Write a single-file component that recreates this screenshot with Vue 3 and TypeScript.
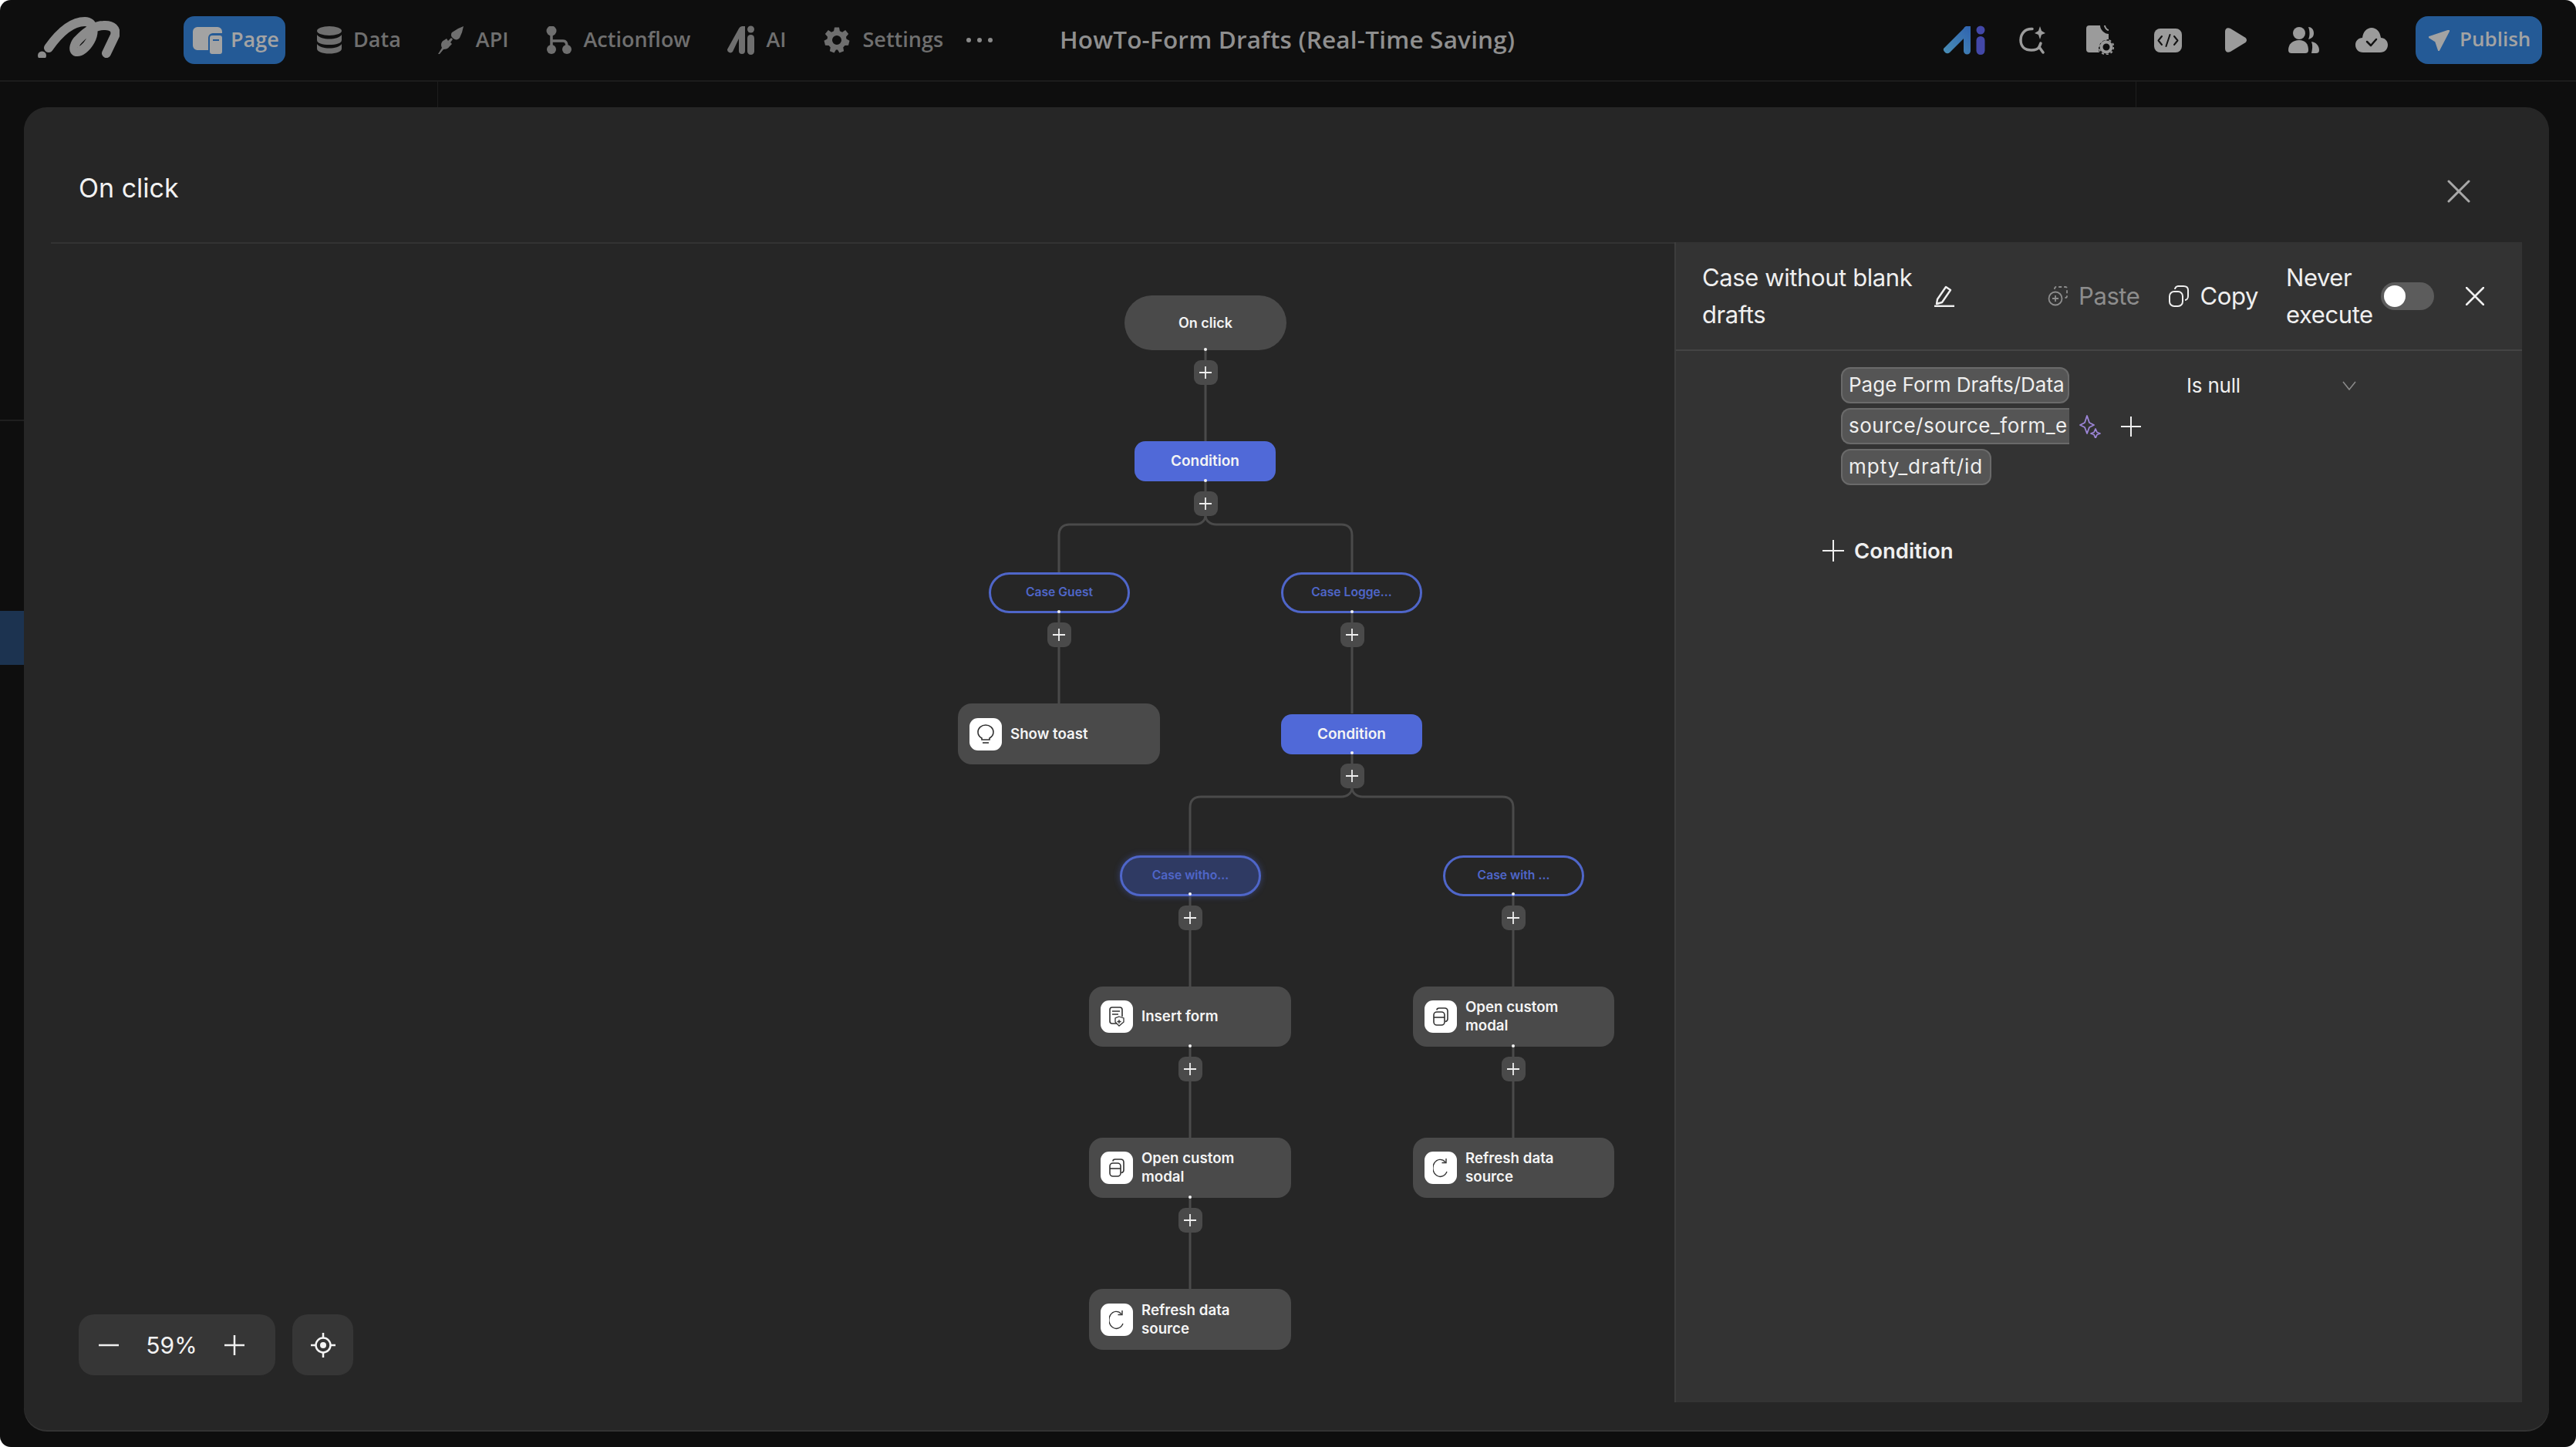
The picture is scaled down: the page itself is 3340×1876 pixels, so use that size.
<script setup lang="ts">
interface FlowNode {
  kind: 'start' | 'condition' | 'case' | 'action'
  label: string[]
  x: number
  y: number
  w: number
  h: number
  icon?: 'toast' | 'form' | 'modal' | 'refresh'
  active?: boolean
}

// page coordinates, the canvas starts at 66/316
const OX = 66
const OY = 316

const nodes: FlowNode[] = [
  { kind: 'start', label: ['On click'], x: 1458, y: 383, w: 210, h: 71 },
  { kind: 'condition', label: ['Condition'], x: 1471, y: 572, w: 183, h: 52 },
  { kind: 'case', label: ['Case Guest'], x: 1282, y: 742, w: 183, h: 53 },
  { kind: 'case', label: ['Case Logge...'], x: 1661, y: 742, w: 183, h: 53 },
  { kind: 'action', label: ['Show toast'], x: 1242, y: 912, w: 262, h: 79, icon: 'toast' },
  { kind: 'condition', label: ['Condition'], x: 1661, y: 926, w: 183, h: 52 },
  { kind: 'case', label: ['Case witho...'], x: 1452, y: 1109, w: 183, h: 53, active: true },
  { kind: 'case', label: ['Case with ...'], x: 1871, y: 1109, w: 183, h: 53 },
  { kind: 'action', label: ['Insert form'], x: 1412, y: 1279, w: 262, h: 78, icon: 'form' },
  { kind: 'action', label: ['Open custom', 'modal'], x: 1832, y: 1279, w: 261, h: 78, icon: 'modal' },
  { kind: 'action', label: ['Open custom', 'modal'], x: 1412, y: 1475, w: 262, h: 78, icon: 'modal' },
  { kind: 'action', label: ['Refresh data', 'source'], x: 1832, y: 1475, w: 261, h: 78, icon: 'refresh' },
  { kind: 'action', label: ['Refresh data', 'source'], x: 1412, y: 1671, w: 262, h: 79, icon: 'refresh' }
]

const addButtons = [
  [1563, 483], [1563, 653], [1373, 823], [1753, 823], [1753, 1006],
  [1543, 1190], [1962, 1190], [1543, 1386], [1962, 1386], [1543, 1582]
]

const dots = [
  [1563, 453], [1563, 623], [1373, 793], [1753, 793], [1753, 976],
  [1543, 1159], [1962, 1159], [1543, 1356], [1962, 1356], [1543, 1552]
]

const edges = [
  'M1563 454V572',
  'M1563 624V668',
  'M1563 668C1563 675 1557 680 1549 680H1387C1378 680 1373 685 1373 694V742',
  'M1563 668C1563 675 1569 680 1577 680H1739C1748 680 1753 685 1753 694V742',
  'M1373 795V912',
  'M1753 795V925',
  'M1753 977V1021',
  'M1753 1021C1753 1028 1747 1033 1739 1033H1557C1548 1033 1543 1038 1543 1047V1109',
  'M1753 1021C1753 1028 1759 1033 1767 1033H1948C1957 1033 1962 1038 1962 1047V1109',
  'M1543 1162V1279',
  'M1962 1162V1279',
  'M1543 1357V1475',
  'M1962 1357V1475',
  'M1543 1553V1671'
]

const box = (x: number, y: number, w: number, h: number) => ({
  left: `${x - OX}px`,
  top: `${y - OY}px`,
  width: `${w}px`,
  height: `${h}px`
})
</script>

<template>
  <div class="app">
    <header class="topbar">
      <svg class="logo" width="110" height="60" viewBox="45 15 110 60">
        <circle cx="54.500" cy="72" r="5.500" fill="#8c8c8c" />
        <path d="M63 62C75 45 92 28 110 28C122 28 123 42 117 53C112 62 104 68 99 67C94 66 96 56 103 50C112 41 122 33 134 33C146 32 151 38 149 46L138 69" fill="none" stroke="#8c8c8c" stroke-width="12" stroke-linecap="round" />
      </svg>
      <nav class="nav">
        <a class="nav-item active">
          <svg width="38" height="36" viewBox="0 0 38 36"><path d="M6 1H32A6 6 0 0 1 38 7V9H26A6 6 0 0 0 20 15V31H6A6 6 0 0 1 0 25V7A6 6 0 0 1 6 1Z" fill="#a3a3a3" /><path fill-rule="evenodd" d="M25 12H35A3 3 0 0 1 38 15V33A3 3 0 0 1 35 36H25A3 3 0 0 1 22 33V15A3 3 0 0 1 25 12ZM26 17V19H34V17Z" fill="#a3a3a3" /></svg>
          <span>Page</span>
        </a>
        <a class="nav-item">
          <svg width="32" height="36" viewBox="0 0 32 36" fill="#6f6f6f"><ellipse cx="16" cy="6" rx="16" ry="6" /><path d="M0 11C3 15 9 16.500 16 16.500S29 15 32 11V18C32 22 25 24 16 24S0 22 0 18Z" /><path d="M0 23C3 27 9 28.500 16 28.500S29 27 32 23V29C32 33 25 35.500 16 35.500S0 33 0 29Z" /></svg>
          <span>Data</span>
        </a>
        <a class="nav-item">
          <svg width="34" height="36" viewBox="0 0 34 36" fill="#6f6f6f"><path d="M18 8L26 3L33 0L31 8L28 15C26 18 22 18 20 16C17 14 16 11 18 8Z" /><path d="M0 36L5 28C3 24 4 20 8 18L11 16L13 19L17 15L19 17L16 21L18 23L15 26C13 29 10 30 7 30L2 36Z" /></svg>
          <span>API</span>
        </a>
        <a class="nav-item">
          <svg width="34" height="36" viewBox="0 0 34 36"><circle cx="7" cy="6" r="6.500" fill="#6f6f6f" /><circle cx="7" cy="30" r="6" fill="#6f6f6f" /><circle cx="27" cy="30" r="6" fill="#6f6f6f" /><path d="M7 10V30M7 19H22C25 19 27 21 27 26" fill="none" stroke="#6f6f6f" stroke-width="3.500" /></svg>
          <span>Actionflow</span>
        </a>
        <a class="nav-item">
          <svg width="35" height="38" viewBox="0 0 35 38" fill="#6f6f6f"><path d="M19 1H23V33A4 4 0 0 1 15 33V17L7 34A4 4 0 0 1 0 31L15 4A5 5 0 0 1 19 1Z" /><circle cx="30.500" cy="5" r="4.500" /><rect x="26" y="12" width="9" height="26" rx="4.500" /></svg>
          <span>AI</span>
        </a>
        <a class="nav-item">
          <svg width="36" height="38" viewBox="0 0 24 24" fill="#6f6f6f"><path fill-rule="evenodd" d="M10 1H14L14.600 4.200L16.700 5.100L19.400 3.300L22.100 6.700L20 9.100L20.300 11L23 12.500L22 16.500L18.900 16.700L17.500 18.400L18.100 21.500L14.300 23L12.700 20.300H11.300L9.700 23L5.900 21.500L6.500 18.400L5.100 16.700L2 16.500L1 12.500L3.700 11L4 9.100L1.900 6.700L4.600 3.300L7.300 5.100L9.400 4.200ZM12 8A4 4 0 1 0 12 16A4 4 0 1 0 12 8Z" /></svg>
          <span>Settings</span>
        </a>
        <span class="more"><i></i><i></i><i></i></span>
      </nav>
      <div class="doc-title">HowTo-Form Drafts (Real-Time Saving)</div>
      <div class="tools">
        <span class="tool">
          <svg width="56" height="38" viewBox="0 0 56 38">
            <defs>
              <linearGradient id="aiA" x1="0" y1="1" x2="1" y2="0"><stop offset="0" stop-color="#4a8fb5" /><stop offset="1" stop-color="#2f63b0" /></linearGradient>
            </defs>
            <path d="M30 1H36V33A4.500 4.500 0 0 1 27 33V17L9 35A5 5 0 0 1 1 30L27 4A5 5 0 0 1 30 1Z" fill="url(#aiA)" />
            <circle cx="49" cy="6" r="5.500" fill="#4348a8" />
            <rect x="43.500" y="14" width="11" height="24" rx="5.500" fill="#4348a8" />
          </svg>
        </span>
        <span class="tool">
          <svg width="34" height="36" viewBox="0 0 34 36" fill="none" stroke="#9b9b9b" stroke-width="3.500" stroke-linecap="round"><path d="M17 3.500C8 3 2 9 2 18S8 31 16 31C20 31 24 30 26 27L31 34" /><path d="M27 0L29 6L34 9L29 11L27 17L25 11L20 9L25 6Z" fill="#9b9b9b" stroke="none" /><path d="M28 22L26 27" /></svg>
        </span>
        <span class="tool">
          <svg width="36" height="38" viewBox="0 0 36 38"><path d="M4 0H18C18 6 24 11 29 11V18C22 18 16 23 16 30C16 32 16 33 17 35H4A4 4 0 0 1 0 31V4A4 4 0 0 1 4 0Z" fill="#9b9b9b" /><path d="M24 0C24 3 27 6 29 6" fill="none" stroke="#9b9b9b" stroke-width="2" /><circle cx="26" cy="28" r="6.500" fill="none" stroke="#9b9b9b" stroke-width="4" /><circle cx="26" cy="28" r="9.500" fill="none" stroke="#9b9b9b" stroke-width="2" stroke-dasharray="3 3" /></svg>
        </span>
        <span class="tool">
          <svg width="36" height="31" viewBox="0 0 36 31"><rect width="36" height="31" rx="8" fill="#9b9b9b" /><path d="M10 10L5.500 15.500L10 21M26 10L30.500 15.500L26 21M20.500 8L15.500 23" fill="none" stroke="#111" stroke-width="2" stroke-linecap="round" stroke-linejoin="round" /></svg>
        </span>
        <span class="tool">
          <svg width="30" height="32" viewBox="0 0 30 32"><path d="M1 5C1 1 4 -1 8 1L26 12C30 14 30 18 26 20L8 31C4 33 1 31 1 27Z" fill="#9b9b9b" /></svg>
        </span>
        <span class="tool">
          <svg width="40" height="34" viewBox="0 0 40 34" fill="#9b9b9b"><circle cx="14" cy="8" r="8" /><path d="M0 30C0 22 6 17 14 17S26 22 26 30C26 33 24 34 22 34H4C2 34 0 33 0 30Z" /><path d="M26 0C30 0 33 3 33 8S30 15 26 16C28 12 28 5 26 0Z" /><path d="M30 19C36 20 40 24 40 30C40 33 38 34 36 34H30C31 29 32 24 30 19Z" /></svg>
        </span>
        <span class="tool">
          <svg width="42" height="32" viewBox="0 0 42 32"><path d="M10 32C4 32 0 28 0 22C0 17 4 13 9 13C10 5 15 0 21 0C27 0 32 5 33 13C38 13 42 17 42 22C42 28 38 32 32 32Z" fill="#9b9b9b" /><path d="M15 18L20 23L27 15" fill="none" stroke="#111" stroke-width="2.500" stroke-linecap="round" stroke-linejoin="round" /></svg>
        </span>
        <button class="publish">
          <svg width="27" height="27" viewBox="0 0 27 27"><path d="M27 0L0 9L9 15L13 27Z" fill="#a3a3a3" stroke="#a3a3a3" stroke-width="1.500" stroke-linejoin="round" /></svg>
          <span>Publish</span>
        </button>
      </div>
    </header>

    <div class="backdrop">
      <div class="side-col">
        <div class="side-line"></div>
        <div class="side-active"></div>
      </div>
      <div class="pane-line first"></div>
      <div class="pane-line second"></div>
    </div>

    <section class="modal">
      <div class="modal-head">
        <h2>On click</h2>
        <svg class="modal-close" width="30" height="30" viewBox="0 0 30 30"><path d="M2 2L28 28M28 2L2 28" stroke="#a8a8a8" stroke-width="3" stroke-linecap="round" /></svg>
      </div>

      <div class="modal-body">
        <div class="canvas">
          <svg class="edges" width="2105" height="1502" :viewBox="`${OX} ${OY} 2105 1502`" fill="none">
            <path v-for="d in edges" :key="d" :d="d" stroke="#4a4a4a" stroke-width="3" />
          </svg>

          <div
            v-for="(n, i) in nodes"
            :key="i"
            class="node"
            :class="[n.kind, { active: n.active }]"
            :style="box(n.x, n.y, n.w, n.h)"
          >
            <span v-if="n.icon" class="node-icon">
              <svg v-if="n.icon === 'toast'" width="24" height="26" viewBox="0 0 24 26" fill="none" stroke="#333" stroke-width="1.600"><path d="M7 18C3.500 16 2 13 2 10A10 9 0 0 1 22 10C22 13 20.500 16 17 18V20H7Z" /><path d="M8 24H16" /></svg>
              <svg v-else-if="n.icon === 'form'" width="20" height="26" viewBox="0 0 20 26" fill="none" stroke="#333" stroke-width="1.600"><path d="M10 22H4A3 3 0 0 1 1 19V4A3 3 0 0 1 4 1H14A3 3 0 0 1 17 4V13" /><path d="M4 6H14M4 10H12" /><path d="M13 13L19 15V20L13 25L8 20V15Z" stroke-width="1.300" /><path d="M13 17V22M10.500 19.500H15.500" stroke-width="1.300" /></svg>
              <svg v-else-if="n.icon === 'modal'" width="20" height="24" viewBox="0 0 20 24" fill="none" stroke="#333" stroke-width="1.600"><rect x="1" y="6" width="14" height="17" rx="4" /><path d="M1 13H15" /><path d="M5 3.500C5 2 6 1 8 1H15C18 1 19 2 19 5V15C19 17 18 18 16 18.500" /></svg>
              <svg v-else width="20" height="26" viewBox="0 0 20 26" fill="none" stroke="#333" stroke-width="1.400"><path d="M16 5.500A9.500 11 0 1 0 18 18" /><path d="M17 1V6.500H11.500" /></svg>
            </span>
            <span class="node-text">
              <span v-for="line in n.label" :key="line">{{ line }}</span>
            </span>
          </div>

          <span
            v-for="(b, i) in addButtons"
            :key="`add-${i}`"
            class="add"
            :style="box(b[0] - 15.500, b[1] - 16, 31, 32)"
          >
            <svg width="16" height="16" viewBox="0 0 16 16"><path d="M8 0V16M0 8H16" stroke="#efefef" stroke-width="1.800" /></svg>
          </span>
          <span
            v-for="(d, i) in dots"
            :key="`dot-${i}`"
            class="dot"
            :style="box(d[0] - 2, d[1] - 2, 4, 4)"
          ></span>

          <div class="zoom-tools">
            <div class="zoom-box">
              <svg width="26" height="26" viewBox="0 0 26 26"><path d="M0 13H26" stroke="#f0f0f0" stroke-width="2.500" /></svg>
              <span>59%</span>
              <svg width="26" height="26" viewBox="0 0 26 26"><path d="M0 13H26M13 0V26" stroke="#f0f0f0" stroke-width="2.500" /></svg>
            </div>
            <div class="center-box">
              <svg width="32" height="32" viewBox="0 0 32 32" fill="none" stroke="#f5f5f5" stroke-width="2.500"><circle cx="16" cy="16" r="9.500" /><circle cx="16" cy="16" r="4" fill="#f5f5f5" stroke="none" /><path d="M16 0V6M16 26V32M0 16H6M26 16H32" /></svg>
            </div>
          </div>
        </div>

        <aside class="panel">
          <div class="panel-head">
            <div class="panel-title">Case without blank drafts</div>
            <svg class="edit" width="28" height="28" viewBox="0 0 28 28" fill="none" stroke="#f0f0f0" stroke-width="2.400" stroke-linejoin="round"><path d="M5 18L16 2L22 6L11 22L4 24Z" /><path d="M1 27H27" stroke-width="2.800" /></svg>
            <div class="action muted">
              <svg width="26" height="26" viewBox="0 0 26 26" fill="none" stroke="#8d8d8d" stroke-width="1.800"><circle cx="10" cy="16" r="8.500" /><path d="M10 12V20M6 16H14" /><path d="M9 4V3A2 2 0 0 1 11 1H23A2 2 0 0 1 25 3V13A2 2 0 0 1 23 15H22" stroke-dasharray="4 3" /></svg>
              <span>Paste</span>
            </div>
            <div class="action">
              <svg width="26" height="28" viewBox="0 0 26 28" fill="none" stroke="#efefef" stroke-width="2"><rect x="1" y="8" width="17" height="19" rx="6" /><path d="M8 5C8 3 10 1 12 1H19C23 1 25 3 25 6V14C25 17 23 19 21 19" /></svg>
              <span>Copy</span>
            </div>
            <div class="never">Never execute</div>
            <div class="toggle"><i></i></div>
            <svg class="panel-close" width="24" height="24" viewBox="0 0 24 24"><path d="M1 1L23 23M23 1L1 23" stroke="#efefef" stroke-width="2.500" stroke-linecap="round" /></svg>
          </div>
          <div class="panel-body">
            <div class="cond-row">
              <div class="chips">
                <div class="chip">Page Form Drafts/Data</div>
                <div class="chip cut">source/source_form_e</div>
                <div class="chip short">mpty_draft/id</div>
              </div>
              <div class="chip-tools">
                <svg width="28" height="30" viewBox="0 0 28 30" fill="none" stroke="#9d86d8" stroke-width="1.800" stroke-linejoin="round"><path d="M10 1L13 10L19 13L13 16L10 24L7 16L1 13L7 10Z" /><path d="M21 18L23 22.500L27 24L23 25.500L21 30L19 25.500L15 24L19 22.500Z" /></svg>
                <svg width="26" height="26" viewBox="0 0 26 26"><path d="M13 0V26M0 13H26" stroke="#efefef" stroke-width="2" /></svg>
              </div>
              <div class="operator">
                <span>Is null</span>
                <svg width="18" height="12" viewBox="0 0 18 12" fill="none"><path d="M1 1L9 11L17 1" stroke="#8a8a8a" stroke-width="1.600" /></svg>
              </div>
            </div>
            <div class="add-condition">
              <svg width="28" height="28" viewBox="0 0 28 28"><path d="M14 0V28M0 14H28" stroke="#efefef" stroke-width="2" /></svg>
              <span>Condition</span>
            </div>
          </div>
        </aside>
      </div>
    </section>
  </div>
</template>

<style>
html,
body {
  margin: 0;
  background: #fff;
}
</style>

<style scoped>
.app {
  position: relative;
  width: 3340px;
  height: 1876px;
  overflow: hidden;
  border-radius: 14px;
  background: #0e0e0e;
  font-family: Inter, "Noto Sans", sans-serif;
}

.topbar {
  display: flex;
  align-items: center;
  height: 106px;
  box-sizing: border-box;
  padding-left: 45px;
  border-bottom: 2px solid #1c1c1c;
}

.logo {
  flex: none;
  margin: -14px 83px 0 0;
}

.nav {
  display: flex;
  align-items: center;
  width: 1136px;
  flex: none;
  gap: 48px;
  color: #6f6f6f;
  font-size: 27px;
  font-weight: 600;
  font-family: "Open Sans", sans-serif;
}

.nav-item {
  display: flex;
  align-items: center;
  gap: 15px;
  height: 62px;
}

.nav-item span {
  margin-bottom: 4px;
}

.nav-item.active {
  width: 132px;
  box-sizing: border-box;
  padding-left: 12px;
  margin-right: -7px;
  gap: 11px;
  border-radius: 14px;
  background: #245a96;
  color: #a3a3a3;
}

.more {
  display: flex;
  gap: 8px;
  margin-left: -18px;
}

.more i {
  width: 6px;
  height: 6px;
  border-radius: 50%;
  background: #8a8a8a;
}

.doc-title {
  margin-bottom: 4px;
  color: #8f8f8f;
  font-size: 31.500px;
  font-weight: 600;
  letter-spacing: 0.2px;
  white-space: nowrap;
  font-family: "Open Sans", sans-serif;
}

.tools {
  display: flex;
  align-items: center;
  margin-left: auto;
  margin-right: 44px;
}

.tool {
  display: flex;
  align-items: center;
  justify-content: center;
  width: 88px;
}

.publish {
  display: flex;
  align-items: center;
  gap: 13px;
  width: 164px;
  height: 62px;
  padding: 0 0 0 17px;
  margin-left: 13px;
  border: 0;
  border-radius: 16px;
  background: #245a96;
  color: #a3a3a3;
  font: 600 26px "Open Sans", sans-serif;
}

.publish span {
  margin-bottom: 4px;
}

.backdrop {
  position: absolute;
  inset: 106px 0 0;
}

.side-col {
  width: 31px;
}

.side-line {
  position: absolute;
  top: 438px;
  left: 0;
  width: 31px;
  height: 2px;
  background: #1f1f1f;
}

.side-active {
  position: absolute;
  top: 686px;
  left: 0;
  width: 31px;
  height: 70px;
  background: #1c3350;
}

.pane-line {
  position: absolute;
  top: 0;
  width: 1px;
  height: 34px;
  background: #1e1e1e;
}

.pane-line.first {
  left: 567px;
}

.pane-line.second {
  left: 2769px;
}

.modal {
  position: absolute;
  top: 139px;
  left: 31px;
  width: 3274px;
  height: 1715px;
  display: flex;
  flex-direction: column;
  border-radius: 30px;
  background: #262626;
  box-shadow: 0 2px 0 #333;
}

.modal-head {
  display: flex;
  align-items: center;
  justify-content: space-between;
  height: 175px;
  flex: none;
  box-sizing: border-box;
  padding: 33px 102px 0 71px;
}

.modal-head h2 {
  margin: 0;
  color: #f2f2f2;
  font-size: 34px;
  font-weight: 400;
}

.modal-close {
  margin-top: 10px;
}

.modal-body {
  display: flex;
  flex: 1;
  min-height: 0;
  margin: 0 35px 36px;
  border-top: 2px solid #333;
}

.canvas {
  position: relative;
  flex: none;
  width: 2105px;
}

.edges {
  position: absolute;
  top: 0;
  left: 0;
}

.node {
  position: absolute;
  display: flex;
  align-items: center;
  justify-content: center;
  box-sizing: border-box;
  color: #f4f4f4;
  font-size: 18.700px;
  font-weight: 600;
}

.node.start {
  border-radius: 36px;
  background: #4a4a4a;
  font-size: 18px;
}

.node.condition {
  border-radius: 14px;
  background: #5069d8;
  font-size: 19px;
}

.node.case {
  padding-bottom: 2px;
  border: 3px solid #4f66c9;
  border-radius: 27px;
  background: #262626;
  color: #4f66c9;
  font-size: 15.700px;
}

.node.case.active {
  background: #2f3a63;
  box-shadow: 0 0 8px rgba(80, 105, 216, 0.45);
}

.node.action {
  justify-content: flex-start;
  gap: 11px;
  padding-left: 15px;
  border-radius: 18px;
  background: #4a4a4a;
}

.node-icon {
  display: flex;
  flex: none;
  align-items: center;
  justify-content: center;
  width: 42px;
  height: 42px;
  border-radius: 11px;
  background: #fff;
}

.node-text {
  display: flex;
  flex-direction: column;
  line-height: 24px;
}

.add {
  position: absolute;
  display: flex;
  align-items: center;
  justify-content: center;
  border-radius: 9px;
  background: #4a4a4a;
}

.dot {
  position: absolute;
  border-radius: 50%;
  background: #f2f2f2;
}

.zoom-tools {
  position: absolute;
  left: 36px;
  top: 1388px;
  display: flex;
  gap: 22px;
}

.zoom-box,
.center-box {
  display: flex;
  align-items: center;
  height: 79px;
  box-sizing: border-box;
  border-radius: 20px;
  background: #363636;
}

.zoom-box {
  width: 255px;
  justify-content: space-between;
  padding: 0 40px 0 26px;
  color: #f2f2f2;
  font-size: 30px;
}

.center-box {
  width: 79px;
  justify-content: center;
}

.panel {
  display: flex;
  flex-direction: column;
  width: 1099px;
  flex: none;
  background: #333;
  border-left: 2px solid #3d3d3d;
  box-sizing: border-box;
  margin-top: -2px;
}

.panel-head {
  display: flex;
  align-items: center;
  height: 141px;
  flex: none;
  box-sizing: border-box;
  padding-left: 34px;
  border-bottom: 2px solid #444;
  color: #efefef;
  font-size: 31px;
  letter-spacing: -0.4px;
}

.panel-title {
  width: 290px;
  flex: none;
  line-height: 48px;
}

.edit {
  flex: none;
  margin-left: 10px;
}

.action {
  display: flex;
  flex: none;
  align-items: center;
  gap: 14px;
}

.action.muted {
  margin-left: 120px;
  margin-right: 38px;
  color: #8d8d8d;
}

.never {
  width: 130px;
  flex: none;
  margin-left: 36px;
  line-height: 48px;
}

.toggle {
  display: flex;
  align-items: center;
  width: 69px;
  height: 36px;
  flex: none;
  box-sizing: border-box;
  padding-left: 4px;
  margin-left: -7px;
  border-radius: 18px;
  background: #5c5c5c;
}

.toggle i {
  width: 28px;
  height: 28px;
  border-radius: 50%;
  background: #fff;
}

.panel-close {
  flex: none;
  margin-left: 41px;
}

.panel-body {
  padding: 21px 0 0 214px;
  color: #efefef;
  font-size: 26px;
  letter-spacing: -0.2px;
}

.cond-row {
  display: flex;
  align-items: flex-start;
}

.chips {
  display: flex;
  flex-direction: column;
  gap: 6px;
  width: 296px;
  flex: none;
}

.chip {
  height: 47px;
  box-sizing: border-box;
  padding: 0 0 0 8px;
  overflow: hidden;
  border: 2px solid #6a6a6a;
  border-radius: 12px;
  background: #555;
  line-height: 41px;
  letter-spacing: 0;
  white-space: nowrap;
}

.chip.cut {
  border-right: 0;
  border-radius: 12px 0 0 12px;
  letter-spacing: 0.5px;
}

.chip.short {
  width: 195px;
  letter-spacing: 1px;
}

.chip-tools {
  display: flex;
  align-items: center;
  gap: 26px;
  height: 47px;
  margin: 53px 0 0 13px;
}

.operator {
  display: flex;
  align-items: center;
  justify-content: space-between;
  width: 220px;
  height: 47px;
  margin-left: 59px;
}

.add-condition {
  display: flex;
  align-items: center;
  gap: 13px;
  margin: 68px 0 0 -24px;
  font-size: 27.500px;
  font-weight: 600;
  letter-spacing: 0;
}
</style>
